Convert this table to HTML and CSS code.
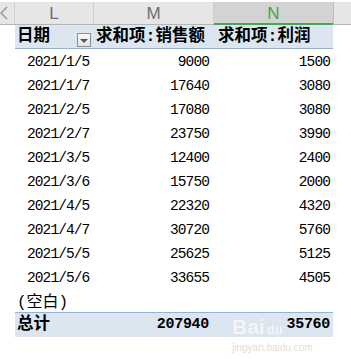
FILE: index.html
```html
<!DOCTYPE html>
<html>
<head>
<meta charset="utf-8">
<link rel="stylesheet" href="styles.css">
</head>
<body>
<div class="sheet">
  <div class="colhead">
    <div class="corner">
      <svg width="9" height="16" viewBox="0 0 9 16"><polyline points="7,2 1,8 7,14" fill="none" stroke="#8a8fb0" stroke-width="1.3"/></svg>
    </div>
    <div class="ch c1">L</div>
    <div class="ch c2">M</div>
    <div class="ch c3 sel">N</div>
    <div class="ch rest"></div>
  </div>
  <div class="pivot">
    <div class="row head">
      <div class="cell lbl cjk b">日期<span class="dd"><span class="tri"></span></span></div>
      <div class="cell cjk b hm">求和项:销售额</div>
      <div class="cell cjk b hn">求和项:利润</div>
    </div>
    <div class="row"><div class="cell date">2021/1/5</div><div class="cell num">9000</div><div class="cell num n2">1500</div></div>
    <div class="row"><div class="cell date">2021/1/7</div><div class="cell num">17640</div><div class="cell num n2">3080</div></div>
    <div class="row"><div class="cell date">2021/2/5</div><div class="cell num">17080</div><div class="cell num n2">3080</div></div>
    <div class="row"><div class="cell date">2021/2/7</div><div class="cell num">23750</div><div class="cell num n2">3990</div></div>
    <div class="row"><div class="cell date">2021/3/5</div><div class="cell num">12400</div><div class="cell num n2">2400</div></div>
    <div class="row"><div class="cell date">2021/3/6</div><div class="cell num">15750</div><div class="cell num n2">2000</div></div>
    <div class="row"><div class="cell date">2021/4/5</div><div class="cell num">22320</div><div class="cell num n2">4320</div></div>
    <div class="row"><div class="cell date">2021/4/7</div><div class="cell num">30720</div><div class="cell num n2">5760</div></div>
    <div class="row"><div class="cell date">2021/5/5</div><div class="cell num">25625</div><div class="cell num n2">5125</div></div>
    <div class="row"><div class="cell date">2021/5/6</div><div class="cell num">33655</div><div class="cell num n2">4505</div></div>
    <div class="row short"><div class="cell lbl cjk blank">(空白)</div><div class="cell"></div><div class="cell"></div></div>
    <div class="row total">
      <div class="cell lbl cjk b">总计</div>
      <div class="cell num tb">207940</div>
      <div class="cell num n2 tb">35760</div>
    </div>
  </div>
  <div class="watermark">
    <div class="wm-big">Bai<span class="paw">du</span></div>
    <div class="wm-small">jingyan.baidu.com</div>
  </div>
</div>
</body>
</html>
```

FILE: styles.css
```css
* { box-sizing: border-box; }
html, body { margin: 0; padding: 0; background: #fff; }
body { width: 351px; height: 359px; overflow: hidden; }
.sheet { position: relative; width: 351px; height: 359px; }

.colhead {
  margin-top: 2px;
  height: 23px;
  display: flex;
  background: #e6e6e6;
  border-bottom: 1px solid #b5b5b5;
}
.corner {
  width: 15px;
  border-right: 1px solid #cfcfcf;
  display: flex;
  align-items: center;
}
.ch {
  display: flex;
  align-items: center;
  justify-content: center;
  font-family: "Liberation Sans", Arial, sans-serif;
  font-size: 17px;
  color: #6e6e6e;
  border-right: 1px solid #cfcfcf;
  padding-top: 1px;
}
.c1 { width: 79px; }
.c2 { width: 120px; }
.c3 { width: 120px; }
.ch.sel {
  background: #d3d3d3;
  color: #3fa54a;
  box-shadow: inset 0 -2px 0 #47a84c;
  border-right: 1px solid #bdbdbd;
  margin-bottom: -1px;
  padding-bottom: 1px;
}
.rest { flex: 1; border-right: none; }

.pivot {
  margin-left: 15px;
  width: 318px;
}
.row {
  display: grid;
  grid-template-columns: 79px 120px 119px;
  height: 24px;
  align-items: center;
}
.row.head {
  background: #dce6f1;
  border-bottom: 1px solid #95b3d7;
}
.row.total {
  background: #dce6f1;
  border-top: 1px solid #95b3d7;
  height: 25px;
}
.row.short { height: 23px; }

.cell {
  white-space: nowrap;
  color: #000;
  line-height: 24px;
  height: 24px;
}
.cjk {
  font-family: "Liberation Mono", "Noto Sans CJK SC", monospace;
  font-size: 16.5px;
}
.b { font-weight: bold; }
.lbl {
  padding-left: 2px;
  position: relative;
}
.hm { padding-left: 2px; }
.hn { padding-left: 4px; }

.date {
  font-family: "Liberation Mono", "DejaVu Sans Mono", monospace;
  font-size: 14.5px;
  letter-spacing: -0.9px;
  padding-left: 12px;
  padding-top: 1px;
}
.num {
  font-family: "Liberation Mono", "DejaVu Sans Mono", monospace;
  font-size: 14.5px;
  letter-spacing: -0.9px;
  text-align: right;
  padding-right: 5px;
  padding-top: 1px;
}
.num.n2 { padding-right: 3px; }
.tb { font-weight: bold; font-size: 15px; letter-spacing: -0.3px; padding-top: 0; }
.blank { font-size: 16px; padding-top: 2px; }

.dd {
  position: absolute;
  left: 62px;
  top: 8px;
  width: 14px;
  height: 14px;
  border: 1px solid #8e8e8e;
  background: linear-gradient(#fafafa, #e4e4e4);
  display: flex;
  align-items: center;
  justify-content: center;
}
.tri {
  width: 0;
  height: 0;
  border-left: 4px solid transparent;
  border-right: 4px solid transparent;
  border-top: 4px solid #555;
  margin-top: 2px;
}

.watermark {
  position: absolute;
  left: 232px;
  top: 312px;
  color: rgba(255, 255, 255, 0.75);
  font-family: "Liberation Sans", Arial, sans-serif;
  pointer-events: none;
}
.wm-big {
  font-size: 21px;
  font-weight: bold;
  line-height: 26px;
  text-shadow: 0 0 1px rgba(200, 200, 200, 0.4);
}
.paw { font-size: 13px; margin-left: 2px; }
.wm-small {
  font-size: 10px;
  line-height: 12px;
  color: rgba(205, 205, 205, 0.7);
  margin-top: -1px;
}
```
